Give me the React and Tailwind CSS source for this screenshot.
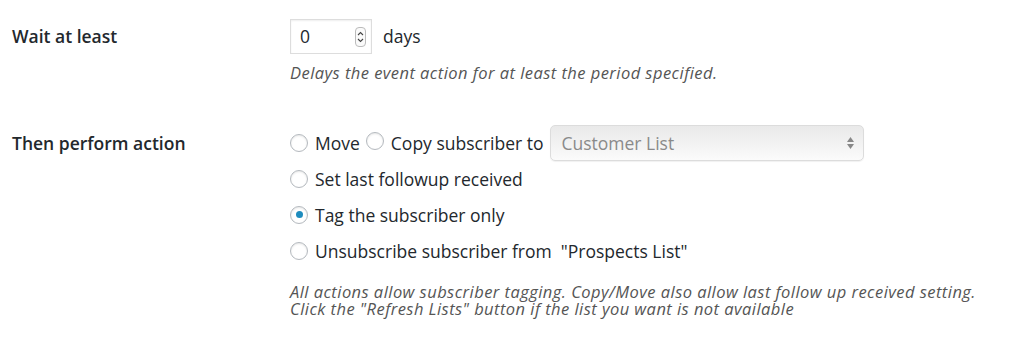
import React from "react";

function Radio({ checked }) {
  return (
    <span className="inline-flex h-[18px] w-[18px] shrink-0 items-center justify-center rounded-full border border-[#b4b9be] bg-white shadow-[inset_0_1px_2px_rgba(0,0,0,0.1)]">
      {checked && <span className="h-[7px] w-[7px] rounded-full bg-[#1e8cbe]" />}
    </span>
  );
}

function Spinner() {
  return (
    <span className="flex h-[20px] w-[11px] flex-col items-center justify-center gap-[2px] rounded-[4px] border border-[#bbb] bg-[#fafafa]">
      <svg width="7" height="5" viewBox="0 0 7 5">
        <path d="M1 4 L3.5 1.5 L6 4" fill="none" stroke="#444" strokeWidth="1.1" />
      </svg>
      <svg width="7" height="5" viewBox="0 0 7 5">
        <path d="M1 1 L3.5 3.5 L6 1" fill="none" stroke="#444" strokeWidth="1.1" />
      </svg>
    </span>
  );
}

function Option({ checked, children }) {
  return (
    <label className="flex h-[36px] items-center gap-[7px]">
      <Radio checked={checked} />
      <span>{children}</span>
    </label>
  );
}

export default function App() {
  return (
    <div className="h-[342px] w-[1024px] bg-white font-['Open_Sans',sans-serif] text-[17.5px] text-[#23282d]">
      {/* wait row */}
      <div className="flex pt-[19px]">
        <div className="w-[290px] pl-[12px] pt-[4px] font-semibold">Wait at least</div>
        <div>
          <div className="flex items-center">
            <div className="flex h-[35px] w-[82px] items-center justify-between border border-[#ddd] bg-white pl-[9px] pr-[5px] shadow-[inset_0_1px_2px_rgba(0,0,0,0.07)]">
              <span>0</span>
              <Spinner />
            </div>
            <span className="ml-[11px]">days</span>
          </div>
          <p className="mt-[7px] text-[16.5px] tracking-[0.45px] italic text-[#555]">
            Delays the event action for at least the period specified.
          </p>
        </div>
      </div>

      {/* action row */}
      <div className="mt-[39px] flex">
        <div className="w-[290px] pl-[12px] pt-[5px] font-semibold">Then perform action</div>
        <div>
          <div className="flex h-[36px] items-center">
            <Radio />
            <span className="ml-[7px]">Move</span>
            <span className="ml-[6px]">
              <Radio />
            </span>
            <span className="ml-[7px]">Copy subscriber to</span>
            <div className="ml-[7px] flex h-[36px] w-[314px] items-center justify-between rounded-[5px] border border-[#dcdcdc] bg-gradient-to-b from-[#e9e9e9] to-[#fbfbfb] pl-[10px] pr-[8px] text-[#8a8a8a] shadow-[0_1px_1px_rgba(0,0,0,0.06)]">
              <span>Customer List</span>
              <svg width="9" height="16" viewBox="0 0 9 16">
                <path d="M4.5 2 L8 7 L1 7 Z" fill="#888" />
                <path d="M1 9 L8 9 L4.5 14 Z" fill="#888" />
              </svg>
            </div>
          </div>
          <Option>Set last followup received</Option>
          <Option checked>Tag the subscriber only</Option>
          <Option>Unsubscribe subscriber from &nbsp;"Prospects List"</Option>
          <div className="mt-[14px] text-[16.5px] leading-[17px] tracking-[0.45px] italic text-[#555]">
            <p>All actions allow subscriber tagging. Copy/Move also allow last follow up received setting.</p>
            <p>Click the "Refresh Lists" button if the list you want is not available</p>
          </div>
        </div>
      </div>
    </div>
  );
}
